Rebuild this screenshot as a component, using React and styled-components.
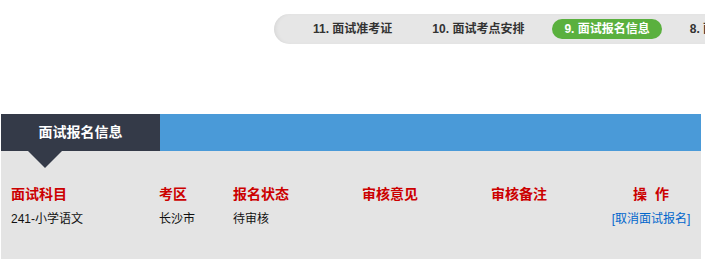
import React from "react";
import styled, { createGlobalStyle } from "styled-components";

const GlobalStyle = createGlobalStyle`
  body {
    margin: 0;
    background: #fff;
    font-family: "Liberation Sans", "Noto Sans CJK SC", sans-serif;
  }
`;

const steps = [
  { label: "11. 面试准考证" },
  { label: "10. 面试考点安排" },
  { label: "9. 面试报名信息", active: true },
  { label: "8. 面试报名" },
];

const columns = ["面试科目", "考区", "报名状态", "审核意见", "审核备注", "操  作"];

const rows = [
  { subject: "241-小学语文", area: "长沙市", status: "待审核", opinion: "", remark: "" },
];

const App = () => {
  return (
    <StPage>
      <GlobalStyle />
      <StStepWrap>
        <StStepBar>
          {steps.map((s) => (
            <StStep key={s.label} active={s.active}>
              {s.label}
            </StStep>
          ))}
        </StStepBar>
      </StStepWrap>

      <StSection>
        <StHeader>
          <StTab>面试报名信息</StTab>
        </StHeader>
        <StBody>
          <StGrid>
            {columns.map((c, i) => (
              <StHead key={c} last={i === columns.length - 1}>
                {c}
              </StHead>
            ))}
            {rows.map((r) => (
              <React.Fragment key={r.subject}>
                <StCell>{r.subject}</StCell>
                <StCell>{r.area}</StCell>
                <StCell>{r.status}</StCell>
                <StCell>{r.opinion}</StCell>
                <StCell>{r.remark}</StCell>
                <StCell last>
                  <StLink href="#">[取消面试报名]</StLink>
                </StCell>
              </React.Fragment>
            ))}
          </StGrid>
        </StBody>
      </StSection>
    </StPage>
  );
};

const StPage = styled.div`
  width: 705px;
  height: 259px;
  overflow: hidden;
  background: #fff;
`;

const StStepWrap = styled.div`
  padding: 14px 0 0 274px;
  height: 30px;
`;

const StStepBar = styled.div`
  display: flex;
  align-items: center;
  gap: 16px;
  height: 30px;
  padding-left: 27px;
  background: #e6e6e6;
  border-radius: 15px 0 0 15px;
  box-shadow: inset 3px 0 4px -2px rgba(0, 0, 0, 0.08);
  white-space: nowrap;
  overflow: hidden;
`;

const StStep = styled.div`
  flex-shrink: 0;
  height: 20px;
  line-height: 20px;
  padding: 0 12px;
  border-radius: 10px;
  font-size: 12px;
  font-weight: bold;
  color: ${(p) => (p.active ? "#fff" : "#333")};
  background: ${(p) => (p.active ? "#5ab03e" : "transparent")};
`;

const StSection = styled.div`
  margin: 70px 4px 0 1px;
`;

const StHeader = styled.div`
  display: flex;
  height: 37px;
  background: #4a9ad8;
`;

const StTab = styled.div`
  position: relative;
  width: 159px;
  background: #343a48;
  color: #fff;
  font-size: 14px;
  font-weight: bold;
  line-height: 37px;
  text-align: center;

  &::after {
    content: "";
    position: absolute;
    left: 27px;
    top: 37px;
    border-left: 17px solid transparent;
    border-right: 17px solid transparent;
    border-top: 17px solid #343a48;
    z-index: 1;
  }
`;

const StBody = styled.div`
  background: #e4e4e4;
  height: 120px;
  padding: 34px 0 0 10px;
  box-sizing: border-box;
`;

const StGrid = styled.div`
  display: grid;
  grid-template-columns: 148px 74px 129px 129px 110px 100px;
  row-gap: 8px;
`;

const StHead = styled.div`
  color: #cc0000;
  font-size: 14px;
  font-weight: bold;
  line-height: 18px;
  white-space: pre;
  text-align: ${(p) => (p.last ? "center" : "left")};
`;

const StCell = styled.div`
  color: #111;
  font-size: 12px;
  line-height: 16px;
  text-align: ${(p) => (p.last ? "center" : "left")};
`;

const StLink = styled.a`
  color: #0066cc;
  text-decoration: none;
  font-size: 12px;
`;

export default App;
